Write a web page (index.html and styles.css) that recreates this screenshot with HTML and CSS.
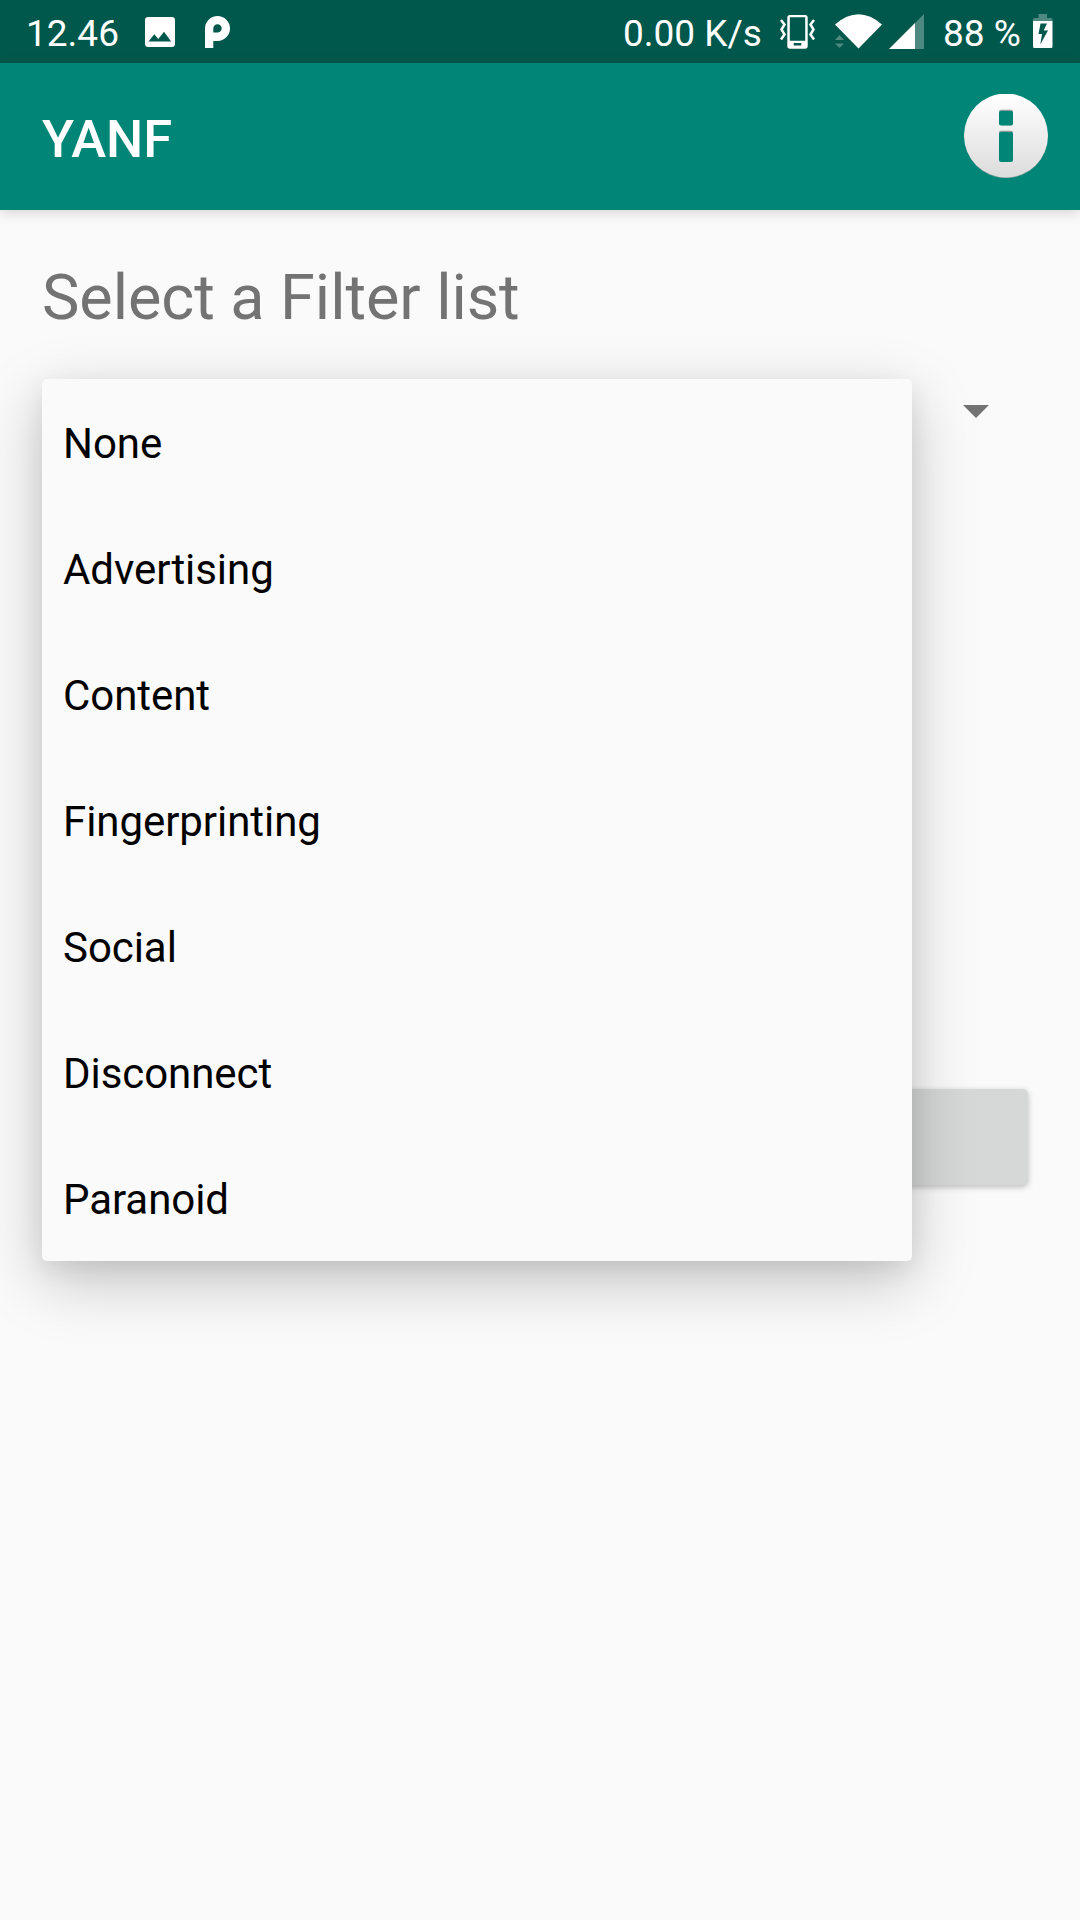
FILE: index.html
```html
<!DOCTYPE html>
<html lang="en">
<head>
<meta charset="utf-8">
<title>YANF</title>
<link rel="stylesheet" href="styles.css">
</head>
<body>
<header class="status-bar">
  <span class="clock">12.46</span>
  <svg class="picture-icon" width="30" height="30" viewBox="0 0 30 30"><path fill="#fff" fill-rule="evenodd" d="M3.3 0H26.7A3.3 3.3 0 0 1 30 3.3V26.7A3.3 3.3 0 0 1 26.7 30H3.3A3.3 3.3 0 0 1 0 26.7V3.3A3.3 3.3 0 0 1 3.3 0ZM3.500 24.500H26.200L19 14.700L13.300 22L9.300 17.200Z"/></svg>
  <svg class="p-icon" width="25" height="32" viewBox="0 0 25 32"><path fill="#fff" fill-rule="evenodd" d="M0 32V12.5A12.5 12.5 0 1 1 12.5 25H8.3V32ZM8.3 16.6H12.5A4.2 4.2 0 1 0 8.3 12.4Z"/></svg>
  <span class="speed">0.00 K/s</span>
  <svg class="vibrate-icon" width="35" height="34" viewBox="0 0 35 34"><path fill="#fff" fill-rule="evenodd" d="M10 0H25A2.700 2.700 0 0 1 27.700 2.700V31A2.700 2.700 0 0 1 25 33.700H10A2.700 2.700 0 0 1 7.300 31V2.700A2.700 2.700 0 0 1 10 0ZM9.800 2.300V25.700H25.200V2.300ZM13.700 28V30.500H21.300V28Z"/><path fill="none" stroke="#fff" stroke-width="2.500" d="M1 5L4.500 9.500L1.500 14.500L4.500 19.500L1 24.500M34 5L30.500 9.500L33.500 14.500L30.500 19.500L34 24.500"/></svg>
  <svg class="wifi-icon" width="48" height="35" viewBox="0 0 48 35"><path fill="#fff" d="M0 10.500Q23.500 -10 47 10.500L23.500 34.500Z"/><path fill="#4d8981" d="M0 26L4.500 21L9 26ZM0 29.500H9L4.500 34Z"/></svg>
  <svg class="cell-icon" width="35" height="35" viewBox="0 0 35 35"><path fill="#fff" d="M0 35L26 9V35Z"/><path fill="#4d8981" d="M26 9L35 0V35H26Z"/></svg>
  <span class="percent">88 %</span>
  <svg class="battery-icon" width="20" height="34" viewBox="0 0 20 34"><path fill="#4d8981" d="M0 7.500V5.500Q0 4 1.500 4H5.500V0H14V4H18Q19.500 4 19.500 5.500V7.500Z"/><path fill="#fff" fill-rule="evenodd" d="M0 7H19.500V32.500Q19.500 34 18 34H1.500Q0 34 0 32.500ZM7.500 9.500L5.500 20H9L7.300 30.500L15 16.500H10.700L14 9.500Z"/></svg>
</header>
<div class="app-bar">
  <h1 class="app-title">YANF</h1>
  <svg class="info-icon" width="84" height="84" viewBox="0 0 84 84">
    <defs><linearGradient id="disc" x1="0" y1="0" x2="0" y2="1"><stop offset="0" stop-color="#fff"/><stop offset="1" stop-color="#dcdcdc"/></linearGradient></defs>
    <circle cx="42" cy="42.500" r="41.700" fill="#7c9b97"/>
    <circle cx="42" cy="41.500" r="42" fill="url(#disc)"/>
    <rect x="35" y="15.700" width="14" height="15.500" rx="2" fill="#8d9f9d"/>
    <rect x="35" y="36.700" width="14" height="20" rx="2" fill="#8d9f9d"/>
    <rect x="35" y="17" width="14" height="14.500" rx="2" fill="#008577"/>
    <rect x="35" y="38" width="14" height="30" rx="2" fill="#008577"/>
  </svg>
</div>
<main class="content">
  <h2 class="heading">Select a Filter list</h2>
  <div class="spinner">
    <svg class="arrow" width="26" height="13" viewBox="0 0 26 13"><path fill="#737373" d="M0 0H26L13 13Z"/></svg>
    <ul class="menu">
      <li class="item">None</li>
      <li class="item">Advertising</li>
      <li class="item">Content</li>
      <li class="item">Fingerprinting</li>
      <li class="item">Social</li>
      <li class="item">Disconnect</li>
      <li class="item">Paranoid</li>
    </ul>
  </div>
  <div class="action"></div>
</main>
</body>
</html>
```
FILE: styles.css
```css
* { box-sizing: border-box; }
body {
  margin: 0;
  height: 1920px;
  overflow: hidden;
  background: #fafafa;
  font-family: Roboto, sans-serif;
}
svg { display: block; flex: none; }
.status-bar {
  display: flex;
  align-items: flex-start;
  height: 63px;
  padding-left: 26px;
  background: #00574b;
  color: #fff;
  font-size: 37px;
  line-height: 43px;
  white-space: nowrap;
}
.status-bar span { flex: none; padding-top: 12px; }
.clock { width: 119px; }
.picture-icon { margin-top: 17px; }
.p-icon { margin: 16px 0 0 30px; }
.speed { width: 158px; margin-left: 393px; }
.vibrate-icon { margin-top: 15px; margin-left: -1px; }
.wifi-icon { margin: 14px 0 0 20px; }
.cell-icon { margin: 14px 0 0 6px; }
.percent { width: 90px; margin-left: 19px; }
.battery-icon { margin-top: 14px; }
.app-bar {
  position: relative;
  display: flex;
  justify-content: space-between;
  height: 147px;
  padding: 31px 32px 0 42px;
  background: #008577;
  box-shadow: 0 3px 12px rgba(0, 0, 0, .15);
}
.app-title {
  margin: 0;
  color: #fff;
  font-size: 52.5px;
  font-weight: 500;
  line-height: 90px;
}
.content { padding: 42px; }
.heading {
  margin: 0;
  height: 127px;
  padding-top: 9px;
  color: #737373;
  font-size: 63px;
  font-weight: 400;
  line-height: 74px;
  letter-spacing: -.06px;
}
.spinner {
  position: relative;
  display: flex;
  justify-content: flex-end;
  height: 63px;
  padding: 26px 49.500px 0 0;
}
.menu {
  position: absolute;
  z-index: 1;
  top: 0;
  left: 0;
  width: 870px;
  margin: 0;
  padding: 0;
  list-style: none;
  border-radius: 5px;
  background: #fafafa;
  box-shadow: 0 20px 64px rgba(0, 0, 0, .22), 0 8px 24px rgba(0, 0, 0, .07);
}
.item {
  height: 126px;
  padding: 3px 21px 0;
  color: #000;
  font-size: 42px;
  line-height: 124px;
  letter-spacing: -.06px;
}
.action {
  height: 96px;
  margin: 647px 10px 0 9px;
  border-radius: 5px;
  background: #d6d8d7;
  box-shadow: 0 2px 6px rgba(0, 0, 0, .25);
}
```
